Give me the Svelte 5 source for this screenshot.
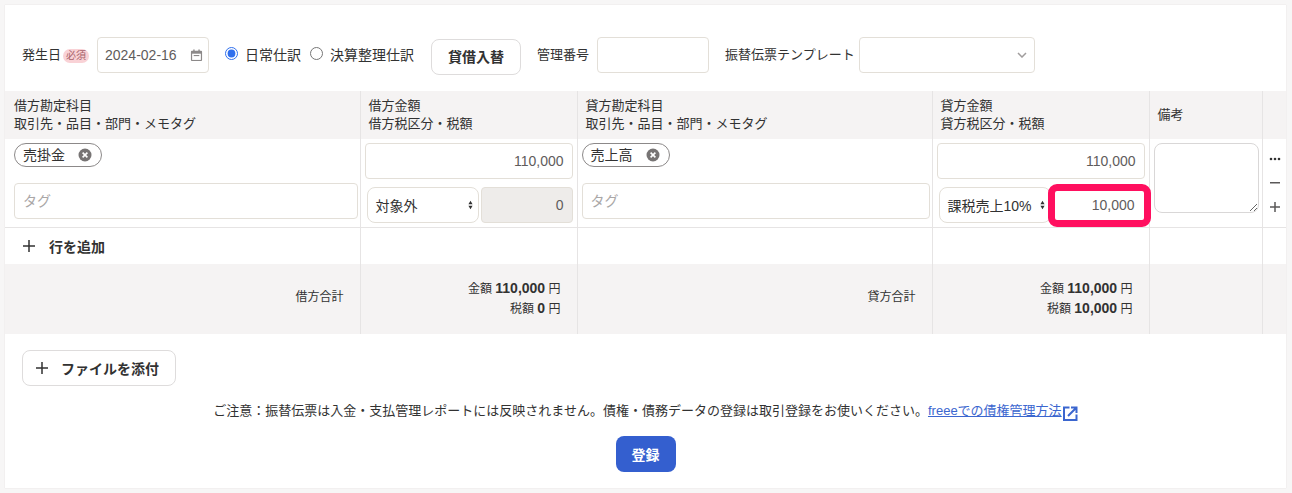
<script>
	const sides = [
		{
			key: "借方",
			account: "売掛金",
			amount: "110,000",
			tax: "対象外",
			taxAmount: "0",
			total: "110,000",
			taxTotal: "0",
		},
		{
			key: "貸方",
			account: "売上高",
			amount: "110,000",
			tax: "課税売上10%",
			taxAmount: "10,000",
			total: "110,000",
			taxTotal: "10,000",
		},
	];
</script>

<div class="page">
	<div class="card">
		<div class="toolbar">
			<span class="label">発生日</span>
			<span class="required">必須</span>
			<div class="date">
				<span>2024-02-16</span>
				<svg width="13" height="14" viewBox="0 0 14 14">
					<path d="M1 3.5a1 1 0 0 1 1-1h1.500V1H5v1.500h4V1h1.500v1.500H12a1 1 0 0 1 1 1V12.500a1 1 0 0 1-1 1H2a1 1 0 0 1-1-1Z" fill="#8c8989" />
					<rect x="2.300" y="5.600" width="9.400" height="6.700" fill="#fff" />
					<rect x="4" y="7" width="6" height="1.200" fill="#8c8989" />
				</svg>
			</div>
			<label class="radio first"><input type="radio" name="kind" checked />日常仕訳</label>
			<label class="radio second"><input type="radio" name="kind" />決算整理仕訳</label>
			<button class="swap" type="button">貸借入替</button>
			<span class="label manage">管理番号</span>
			<input class="text manage-input" type="text" />
			<span class="label template">振替伝票テンプレート</span>
			<div class="template-select">
				<svg width="10" height="6" viewBox="0 0 10 6">
					<path d="M1 1l4 4 4-4" fill="none" stroke="#a09d9d" stroke-width="1.500" />
				</svg>
			</div>
		</div>

		<table>
			<colgroup>
				<col style="width: 355px" />
				<col style="width: 217px" />
				<col style="width: 355px" />
				<col style="width: 217px" />
				<col style="width: 113px" />
				<col style="width: 24px" />
			</colgroup>
			<thead>
				<tr>
					{#each sides as side}
						<th>{side.key}勘定科目<br />取引先・品目・部門・メモタグ</th>
						<th>{side.key}金額<br />{side.key}税区分・税額</th>
					{/each}
					<th>備考</th>
					<th></th>
				</tr>
			</thead>
			<tbody>
				<tr class="entry">
					{#each sides as side, i}
						<td class="account-cell" class:credit={i === 1}>
							<div class="chip">
								<span>{side.account}</span>
								<svg width="14" height="14" viewBox="0 0 14 14">
									<circle cx="7" cy="7" r="6.500" fill="#777474" />
									<path d="M4.600 4.600l4.800 4.800M9.400 4.600l-4.800 4.800" stroke="#fff" stroke-width="1.600" />
								</svg>
							</div>
							<input class="text tag" type="text" placeholder="タグ" />
						</td>
						<td class="amount-cell">
							<input class="text amount" type="text" value={side.amount} />
							<div class="tax-row">
								<div class="tax-select">
									<span>{side.tax}</span>
									<svg width="5" height="10" viewBox="0 0 6 10">
										<path d="M3 0l2.500 4h-5ZM3 10L.500 6h5Z" fill="#323232" />
									</svg>
								</div>
								{#if i === 0}
									<input class="text tax-amount" type="text" value={side.taxAmount} readonly />
								{:else}
									<input class="text tax-marked" type="text" value={side.taxAmount} />
								{/if}
							</div>
						</td>
					{/each}
					<td class="memo-cell"><textarea></textarea></td>
					<td class="ops-cell">
						<svg width="12" height="56" viewBox="0 0 12 56">
							<circle cx="2" cy="3" r="1.300" fill="#323232" />
							<circle cx="6" cy="3" r="1.300" fill="#323232" />
							<circle cx="10" cy="3" r="1.300" fill="#323232" />
							<rect x="1" y="26" width="10" height="1.500" fill="#5a5858" />
							<path d="M1 51h10M6 46v10" stroke="#5a5858" stroke-width="1.500" />
						</svg>
					</td>
				</tr>
				<tr class="add-row">
					<td>
						<button class="add" type="button">
							<svg width="14" height="14" viewBox="0 0 14 14">
								<path d="M1 7h12M7 1v12" stroke="#323232" stroke-width="1.500" />
							</svg>
							行を追加
						</button>
					</td>
					<td></td>
					<td></td>
					<td></td>
					<td></td>
					<td></td>
				</tr>
				<tr class="totals">
					{#each sides as side}
						<td class="total-label"><span>{side.key}合計</span></td>
						<td class="total-values">
							金額 <b>{side.total}</b> 円<br />
							税額 <b>{side.taxTotal}</b> 円
						</td>
					{/each}
					<td></td>
					<td></td>
				</tr>
			</tbody>
		</table>

		<div class="attach">
			<button class="attach-button" type="button">
				<svg width="14" height="14" viewBox="0 0 14 14">
					<path d="M1 7h12M7 1v12" stroke="#323232" stroke-width="1.500" />
				</svg>
				ファイルを添付
			</button>
		</div>

		<p class="notice">
			ご注意：振替伝票は入金・支払管理レポートには反映されません。債権・債務データの登録は取引登録をお使いください。<a href="#help">freeeでの債権管理方法</a>
			<svg width="15" height="15" viewBox="0 0 15 15">
				<path d="M6.500 1.500H1v12.500h12.500V8.500" fill="none" stroke="#3b66cf" stroke-width="2" />
				<path d="M5 10L13 2M8 1.500h5.500V7" fill="none" stroke="#3b66cf" stroke-width="2" />
			</svg>
		</p>

		<div class="submit">
			<button class="primary" type="button">登録</button>
		</div>
	</div>
</div>

<style>
	:global(body) {
		background: #f7f6f6;
	}
	.page {
		padding: 5px 0 5px 5px;
		font-family: "Liberation Sans", "Noto Sans CJK JP", sans-serif;
		font-size: 14px;
		color: #323232;
	}
	.card {
		width: 1281px;
		height: 483px;
		background: #fff;
		box-shadow: 0 0 1px #d8d6d6;
	}
	.toolbar {
		display: flex;
		align-items: center;
		height: 36px;
		padding: 32px 0 18px 17px;
	}
	.label {
		margin-bottom: 4px;
		font-size: 13px;
		white-space: nowrap;
	}
	.required {
		box-sizing: border-box;
		width: 26px;
		margin: 2px 8px 0 2px;
		background: #f9d2d6;
		color: #a7636b;
		border-radius: 7px;
		font-size: 10px;
		line-height: 14px;
		text-align: center;
	}
	.date {
		display: flex;
		align-items: center;
		justify-content: space-between;
		box-sizing: border-box;
		width: 112px;
		height: 36px;
		padding: 0 5px 0 7px;
		border: 1px solid #e3dfd8;
		border-radius: 4px;
		color: #5f5c5c;
	}
	.radio {
		display: flex;
		align-items: center;
		margin-bottom: 3px;
		white-space: nowrap;
	}
	.radio input {
		width: 13px;
		height: 13px;
		margin: 0 7px 0 0;
		accent-color: #2f6fed;
	}
	.first {
		margin-left: 16px;
	}
	.second {
		margin-left: 9px;
	}
	.swap {
		width: 90px;
		height: 36px;
		margin: 2px 16px -2px 17px;
		padding: 0 0 3px;
		background: #fff;
		border: 1px solid #dedcdc;
		border-radius: 8px;
		font: inherit;
		font-weight: 700;
		color: #323232;
	}
	.text {
		box-sizing: border-box;
		height: 36px;
		padding: 0 8px;
		background: #fff;
		border: 1px solid #e3dfd8;
		border-radius: 4px;
		font: inherit;
		color: #5f5c5c;
		outline: none;
	}
	.text::placeholder {
		color: #aaa7a7;
	}
	.manage-input {
		width: 112px;
		margin: 0 16px 0 8px;
	}
	.template-select {
		display: flex;
		align-items: center;
		justify-content: flex-end;
		box-sizing: border-box;
		width: 176px;
		height: 36px;
		margin-left: 4px;
		padding-right: 7px;
		border: 1px solid #e3dfd8;
		border-radius: 4px;
	}
	table {
		width: 1281px;
		table-layout: fixed;
		border-collapse: collapse;
	}
	th {
		height: 48px;
		padding: 0 8px 1px;
		box-sizing: border-box;
		background: #f5f3f3;
		border-left: 1px solid #e6e4e4;
		font-size: 13px;
		font-weight: 400;
		text-align: left;
		line-height: 18px;
	}
	th:first-child {
		border-left: none;
		padding-left: 9px;
	}
	td:first-child {
		border-left: none;
	}
	td {
		box-sizing: border-box;
		padding: 0;
		border-left: 1px solid #e6e4e4;
		vertical-align: top;
	}
	.entry td {
		height: 88px;
		border-bottom: 1px solid #e6e4e4;
	}
	.account-cell {
		padding: 4px 2px 0 9px;
	}
	.account-cell.credit {
		padding-left: 4px;
	}
	.chip {
		display: flex;
		align-items: center;
		justify-content: space-between;
		box-sizing: border-box;
		width: 88px;
		height: 24px;
		padding: 0 9px 0 8px;
		border: 1px solid #8c8989;
		border-radius: 12px;
		line-height: 22px;
	}
	.tag {
		display: block;
		width: 100%;
		margin-top: 16px;
	}
	.amount-cell {
		padding: 4px 4px 0 4px;
	}
	.amount {
		display: block;
		width: 208px;
		text-align: right;
	}
	.tax-row {
		display: flex;
		align-items: center;
		gap: 2px;
		margin: 8px 0 0 2px;
		height: 36px;
	}
	.tax-select {
		display: flex;
		align-items: center;
		justify-content: space-between;
		box-sizing: border-box;
		width: 112px;
		height: 36px;
		padding: 0 5px 0 8px;
		border: 1px solid #e3dfd8;
		border-radius: 8px;
		flex: none;
	}
	.tax-amount {
		width: 92px;
		background: #eeecea;
		text-align: right;
	}
	.tax-marked {
		position: relative;
		flex: none;
		width: 103px;
		height: 43px;
		margin: 0 -7px 0 -5px;
		padding-right: 9px;
		border: 7px solid #ff0f5f;
		border-radius: 9px;
		text-align: right;
	}
	.memo-cell {
		padding: 4px 3px 0 4px;
	}
	textarea {
		display: block;
		box-sizing: border-box;
		width: 105px;
		height: 70px;
		border: 1px solid #d9d7d7;
		border-radius: 8px;
		outline: none;
	}
	.ops-cell {
		padding: 17px 0 0 6px;
	}
	.ops-cell svg {
		display: block;
	}
	.add-row td {
		height: 37px;
		vertical-align: middle;
	}
	.add {
		display: flex;
		align-items: center;
		gap: 13px;
		padding: 0 0 0 17px;
		background: none;
		border: none;
		font: inherit;
		font-weight: 700;
		color: #323232;
	}
	.totals td {
		height: 70px;
		background: #f5f3f3;
		font-size: 12px;
		line-height: 19px;
		vertical-align: middle;
		text-align: right;
	}
	.total-label {
		padding-right: 16px;
	}
	.total-label span {
		display: block;
		margin-bottom: 3px;
	}
	.total-values {
		padding-right: 16px;
	}
	.total-values b {
		font-size: 14px;
	}
	.attach {
		padding: 16px 0 0 17px;
	}
	.attach-button {
		display: flex;
		align-items: center;
		gap: 12px;
		box-sizing: border-box;
		width: 154px;
		height: 36px;
		padding: 0 0 0 12px;
		background: #fff;
		border: 1px solid #dedcdc;
		border-radius: 8px;
		font: inherit;
		font-weight: 700;
		color: #323232;
	}
	.notice {
		display: flex;
		align-items: center;
		justify-content: center;
		height: 20px;
		margin: 15px 0 0 0;
		font-size: 13px;
		line-height: 20px;
		white-space: nowrap;
	}
	.notice a {
		color: #3b66cf;
	}
	.notice svg {
		margin: 4px 0 0 1px;
	}
	.submit {
		display: flex;
		justify-content: center;
		margin-top: 15px;
	}
	.primary {
		width: 60px;
		height: 36px;
		background: #345fcf;
		border: none;
		border-radius: 8px;
		font: inherit;
		font-weight: 700;
		color: #fff;
	}
</style>
